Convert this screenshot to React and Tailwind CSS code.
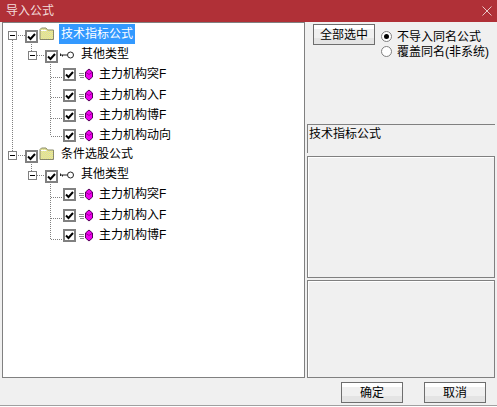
import React from 'react';

const FONT = '"Liberation Sans", "Noto Sans CJK SC", sans-serif';

const rows = [
  { type: 'folder', label: '技术指标公式', selected: true, cls: 'h-[20px] pl-[5px]' },
  { type: 'key', label: '其他类型', cls: 'h-[20px] pl-[25px]' },
  { type: 'doc', label: '主力机构突F', cls: 'h-[21px] pl-[60px]' },
  { type: 'doc', label: '主力机构入F', cls: 'h-[20px] pl-[60px]' },
  { type: 'doc', label: '主力机构博F', cls: 'h-[20px] pl-[60px]' },
  { type: 'doc', label: '主力机构动向', cls: 'h-[19px] pl-[60px]' },
  { type: 'folder', label: '条件选股公式', cls: 'h-[20px] pl-[5px]' },
  { type: 'key', label: '其他类型', cls: 'h-[20px] pl-[25px]' },
  { type: 'doc', label: '主力机构突F', cls: 'h-[21px] pl-[60px]' },
  { type: 'doc', label: '主力机构入F', cls: 'h-[20px] pl-[60px]' },
  { type: 'doc', label: '主力机构博F', cls: 'h-[20px] pl-[60px]' },
];

const Expander = () => (
  <span className="flex h-[9px] w-[9px] shrink-0 items-center justify-center border border-[#808080] bg-white">
    <span className="h-px w-[5px] bg-black" />
  </span>
);

const Check = () => (
  <span className="flex h-[13px] w-[13px] shrink-0 items-center justify-center border-2 border-[#808080] bg-white">
    <svg width="9" height="9" viewBox="0 0 9 9">
      <path d="M1 4.5 L3.5 7 L8 2" fill="none" stroke="#000" strokeWidth="2" />
    </svg>
  </span>
);

const FolderIcon = () => (
  <svg width="16" height="14" viewBox="0 0 16 14" className="shrink-0 -translate-y-[3px]">
    <defs>
      <pattern id="dither" width="2" height="2" patternUnits="userSpaceOnUse">
        <rect width="2" height="2" fill="#ffff66" />
        <rect width="1" height="1" fill="#c8c8c8" />
        <rect x="1" y="1" width="1" height="1" fill="#c8c8c8" />
      </pattern>
    </defs>
    <path d="M1 12.5 V2.5 L2.5 1 H7 L8.5 3 H14.5 V12.5 Z" fill="url(#dither)" stroke="#8a8a6a" />
    <path d="M2 3.5 H7.5" stroke="#fff" />
  </svg>
);

const KeyIcon = () => (
  <svg width="16" height="10" viewBox="0 0 16 10" className="shrink-0">
    <circle cx="11.5" cy="5" r="3" fill="#fff" stroke="#222" />
    <path d="M1 5 H8 M1.5 3.5 V6 M3.5 5 V6.5" fill="none" stroke="#222" />
  </svg>
);

const DocIcon = () => (
  <svg width="15" height="13" viewBox="0 0 15 13" className="shrink-0">
    <path d="M1 5.5 H6 M1 7.5 H6 M2 9.5 H6" stroke="#8a8a8a" />
    <path d="M11 1 L14.5 4 V9 L11 12 L7.5 9 V4 Z" fill="#ee00ee" stroke="#55005a" />
    <path d="M8 4.5 L11 6.5 L14 4.5" fill="none" stroke="#990099" />
  </svg>
);

const TreeLines = () => (
  <svg width="80" height="240" className="absolute left-0 top-0" fill="none" stroke="#808080" strokeDasharray="1 1">
    <path d="M9.5 17 V128" />
    <path d="M15 12.5 H22 M15 132.5 H22" />
    <path d="M28.5 21 V28 M28.5 141 V148" />
    <path d="M34 32.5 H42 M34 152.5 H42" />
    <path d="M47.5 41 V113 M47.5 161 V216" />
    <path d="M48 54.5 H60 M48 74.5 H60 M48 95.5 H60 M48 113.5 H60" />
    <path d="M48 174.5 H60 M48 195.5 H60 M48 216.5 H60" />
  </svg>
);

const TreeRow = ({ type, label, selected, cls }) => (
  <div className={`flex items-start ${cls}`}>
    {type !== 'doc' && (
      <span className="mr-[8px] mt-[7px]">
        <Expander />
      </span>
    )}
    <span className={type === 'doc' ? 'mt-[4px] mr-[2px]' : 'mt-[6px] mr-[1px]'}>
      <Check />
    </span>
    <span className={type === 'key' ? 'mt-[6px]' : type === 'doc' ? 'mt-[4px]' : 'mt-[6px]'}>
      {type === 'folder' && <FolderIcon />}
      {type === 'key' && <KeyIcon />}
      {type === 'doc' && <DocIcon />}
    </span>
    <span
      className={`ml-[4px] flex h-[20px] items-center whitespace-nowrap px-[2px] text-[12px] ${
        selected ? 'bg-[#3399ff] text-white' : 'text-black'
      }`}
    >
      {label}
    </span>
  </div>
);

const Btn = ({ children, cls }) => (
  <button className={`flex h-[21px] w-[62px] items-center justify-center border border-[#6e6e6e] bg-[linear-gradient(#fff_0%,#fff_20%,#f0f0f0_20%,#f0f0f0_70%,#e4e4e4_70%)] text-[12px] text-black ${cls}`}>
    {children}
  </button>
);

const Radio = ({ on, label }) => (
  <div className="flex h-[15px] items-center gap-[5px]">
    <span className="flex h-[11px] w-[11px] items-center justify-center rounded-full border border-[#808080] bg-white">
      {on && <span className="h-[5px] w-[5px] rounded-full bg-black" />}
    </span>
    <span className="whitespace-nowrap text-[12px] leading-none text-black">{label}</span>
  </div>
);

export default function App() {
  return (
    <div className="flex h-[407px] w-[497px] flex-col overflow-hidden bg-[#f0f0f0]" style={{ fontFamily: FONT }}>
      <div className="flex h-[22px] shrink-0 items-center justify-between bg-[#b03037] pl-[6px] pr-[5px] text-[12px] text-[#f3dcdc]">
        <span>导入公式</span>
        <svg width="10" height="10" viewBox="0 0 10 10" stroke="#e8c8c8" strokeWidth="1">
          <path d="M0.5 0.5 L9.5 9.5 M9.5 0.5 L0.5 9.5" />
        </svg>
      </div>

      <div className="flex h-[356px] shrink-0 pl-[2px] pr-[2px]">
        <div className="relative h-full w-[303px] shrink-0 border border-[#808080] border-r-[#808080] bg-white pt-px">
          <TreeLines />
          <div className="relative">
            {rows.map((r, i) => (
              <TreeRow key={i} {...r} />
            ))}
          </div>
        </div>

        <div className="ml-[2px] flex min-w-0 flex-1 flex-col">
          <div className="flex h-[102px] shrink-0 items-start pl-[6px] pt-[2px]">
            <Btn cls="w-[62px]">全部选中</Btn>
            <div className="ml-[6px] mt-[5px]">
              <Radio on label="不导入同名公式" />
              <Radio label="覆盖同名(非系统)" />
            </div>
          </div>
          <div className="h-[29px] shrink-0 border-l border-t border-[#808080] border-b-white border-r-white pl-px pt-[2px] text-[12px] leading-[14px] text-black">
            技术指标公式
          </div>
          <div className="mt-[3px] h-[122px] shrink-0 border border-[#808080] shadow-[inset_1px_1px_0_#fff]" />
          <div className="mt-[2px] h-[98px] shrink-0 border border-[#808080] shadow-[inset_1px_1px_0_#fff]" />
        </div>
      </div>

      <div className="flex flex-1 items-start justify-end pr-[11px] pt-[4px]">
        <Btn>确定</Btn>
        <Btn cls="ml-[21px]">取消</Btn>
      </div>
      <div className="h-px shrink-0 bg-[#a0a0a0]" />
      <div className="h-px shrink-0 bg-white" />
    </div>
  );
}
